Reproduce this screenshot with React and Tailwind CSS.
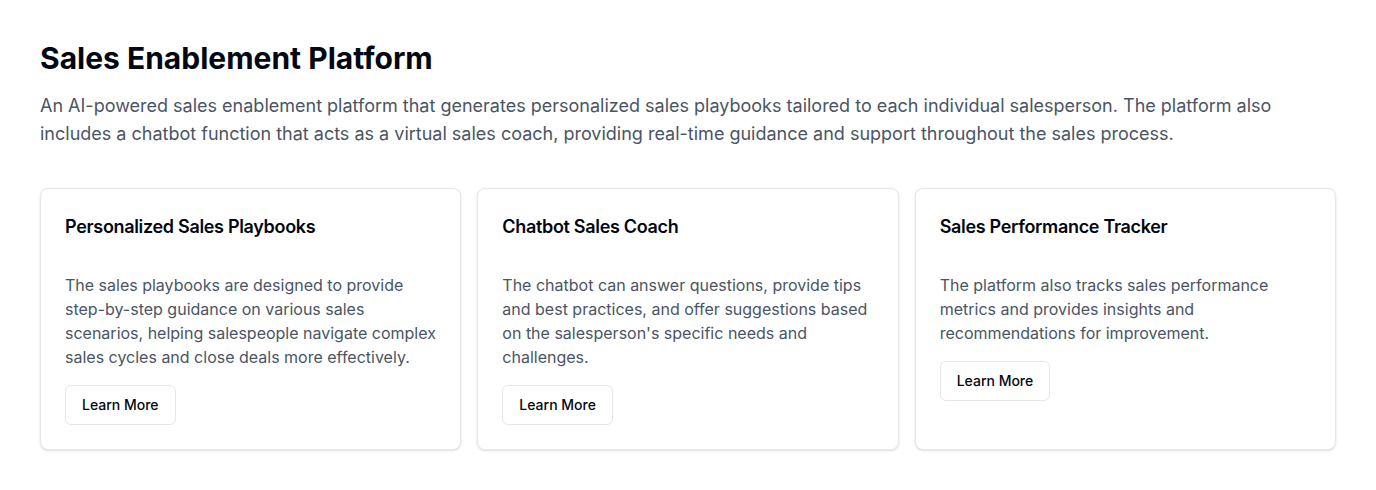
import React from 'react';

const features = [
  {
    title: 'Personalized Sales Playbooks',
    text: 'The sales playbooks are designed to provide step-by-step guidance on various sales scenarios, helping salespeople navigate complex sales cycles and close deals more effectively.',
  },
  {
    title: 'Chatbot Sales Coach',
    text: "The chatbot can answer questions, provide tips and best practices, and offer suggestions based on the salesperson's specific needs and challenges.",
  },
  {
    title: 'Sales Performance Tracker',
    text: 'The platform also tracks sales performance metrics and provides insights and recommendations for improvement.',
  },
];

const FeatureCard = ({ title, text }) => (
  <div className="bg-white border border-gray-200 rounded-lg shadow-sm p-6">
    {/* Title */}
    <h3 className="text-lg leading-7 font-semibold text-gray-950 tracking-[-0.32px]">{title}</h3>

    {/* Body */}
    <p className="mt-8 text-base leading-6 text-gray-600">{text}</p>

    <button className="mt-4 h-10 px-4 border border-gray-200 rounded-md bg-white text-sm font-medium text-gray-950 hover:bg-gray-50 transition">
      Learn More
    </button>
  </div>
);

const App = () => {
  return (
    <div className="min-h-screen bg-white px-10 pt-10 pb-10 font-['Inter',sans-serif]">
      <h1 className="text-3xl leading-9 font-bold text-gray-950">
        Sales Enablement Platform
      </h1>
      <p className="mt-4 text-lg leading-7 text-gray-600">
        An AI-powered sales enablement platform that generates personalized sales playbooks tailored to each individual
        salesperson. The platform also includes a chatbot function that acts as a virtual sales coach, providing real-time
        guidance and support throughout the sales process.
      </p>

      {/* Cards */}
      <div className="mt-10 grid grid-cols-3 gap-4">
        {features.map((f) => (
          <FeatureCard key={f.title} title={f.title} text={f.text} />
        ))}
      </div>
    </div>
  );
};

export default App;
